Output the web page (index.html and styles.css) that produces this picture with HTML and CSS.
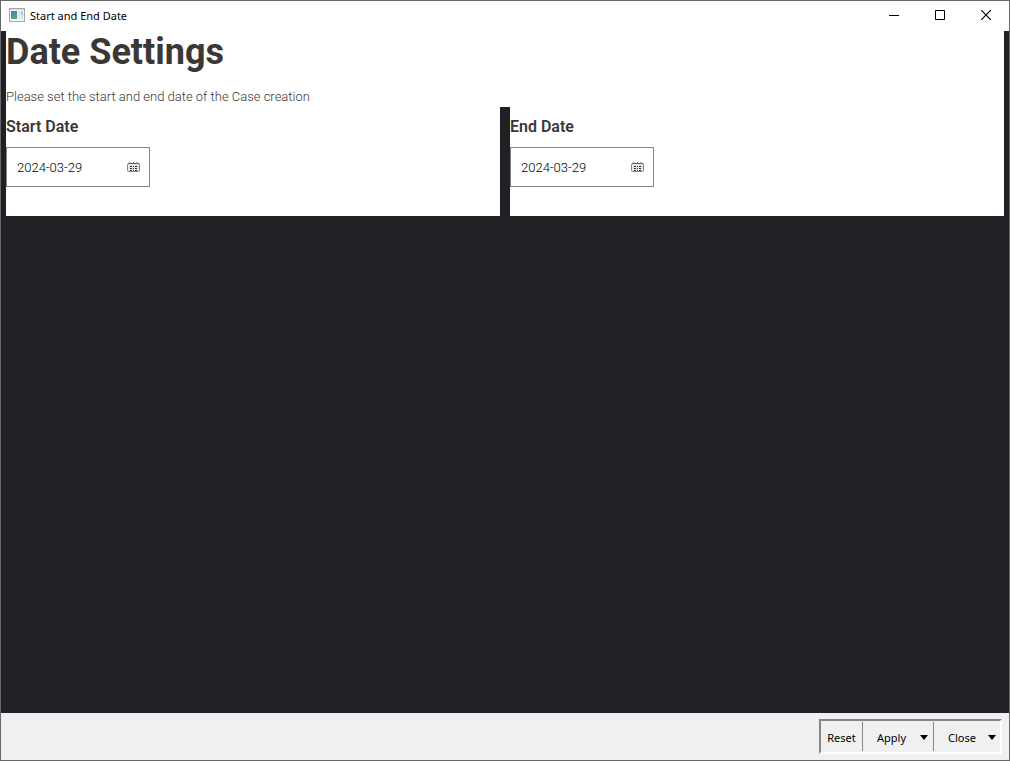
FILE: index.html
```html
<!DOCTYPE html>
<html lang="en">
<head>
<meta charset="utf-8">
<title>Start and End Date</title>
<link rel="stylesheet" href="styles.css">
</head>
<body>
<div class="window">
  <header class="titlebar">
    <svg class="app-icon" width="16" height="14" viewBox="0 0 16 14" aria-hidden="true">
      <defs><linearGradient id="pane" x1="0" y1="0" x2="0" y2="1"><stop offset="0" stop-color="#4b7fae"/><stop offset="1" stop-color="#55aa82"/></linearGradient></defs>
      <rect x=".5" y=".5" width="15" height="13" fill="#f4f5f6" stroke="#a3a8ae"/>
      <path d="M1 1.500h14" stroke="#d3d8de"/>
      <rect x="2" y="3" width="6" height="8" fill="url(#pane)"/>
      <rect x="9" y="3" width="2" height="8" fill="#dfe3e6"/>
      <rect x="12" y="3" width="2" height="4" fill="#a9c6dc"/>
      <rect x="12" y="7" width="2" height="4" fill="#cfe3d8"/>
    </svg>
    <span class="window-title">Start and End Date</span>
    <div class="window-controls">
      <button type="button" aria-label="Minimize"><svg width="10" height="10" viewBox="0 0 10 10"><path d="M0 5.500h10" stroke="#000"/></svg></button>
      <button type="button" aria-label="Maximize"><svg width="10" height="10" viewBox="0 0 10 10"><path d="M.5.5h9v9h-9z" fill="none" stroke="#000"/></svg></button>
      <button type="button" aria-label="Close window"><svg width="10" height="10" viewBox="0 0 10 10"><path d="M0 0l10 10M10 0L0 10" stroke="#000" stroke-width="1.200"/></svg></button>
    </div>
  </header>
  <main class="content">
    <section class="intro">
      <h1>Date Settings</h1>
      <p>Please set the start and end date of the Case creation</p>
    </section>
    <div class="columns">
      <section class="panel">
        <label for="start">Start Date</label>
        <div class="date-field">
          <input id="start" type="text" value="2024-03-29">
          <button type="button" aria-label="Choose start date"><svg width="13" height="10" viewBox="0 0 13 10"><rect x=".5" y="1.500" width="12" height="8" rx="1" fill="#e4e4e4" stroke="#858585"/><path d="M1 1.500h11" stroke="#555" stroke-dasharray="2 1"/><path d="M3 4.500h2m1 0h1m1 0h2M3 6.500h2m1 0h1m1 0h2M3 8.500h2m1 0h1m1 0h2" stroke="#333"/><path d="M3 0v2M6.500 0v2M10 0v2" stroke="#777"/></svg></button>
        </div>
      </section>
      <section class="panel">
        <label for="end">End Date</label>
        <div class="date-field">
          <input id="end" type="text" value="2024-03-29">
          <button type="button" aria-label="Choose end date"><svg width="13" height="10" viewBox="0 0 13 10"><rect x=".5" y="1.500" width="12" height="8" rx="1" fill="#e4e4e4" stroke="#858585"/><path d="M1 1.500h11" stroke="#555" stroke-dasharray="2 1"/><path d="M3 4.500h2m1 0h1m1 0h2M3 6.500h2m1 0h1m1 0h2M3 8.500h2m1 0h1m1 0h2" stroke="#333"/><path d="M3 0v2M6.500 0v2M10 0v2" stroke="#777"/></svg></button>
        </div>
      </section>
    </div>
  </main>
  <footer class="footer">
    <div class="toolbar">
      <button type="button">Reset</button>
      <button type="button" class="split">Apply<svg width="8" height="5" viewBox="0 0 8 5"><path d="M0 0h8L4 5z"/></svg></button>
      <button type="button" class="split">Close<svg width="8" height="5" viewBox="0 0 8 5"><path d="M0 0h8L4 5z"/></svg></button>
    </div>
  </footer>
</div>
</body>
</html>
```
FILE: styles.css
```css
* { box-sizing: border-box; }
body { margin: 0; font-family: Roboto, sans-serif; color: #3b3735; }
button { border: 0; padding: 0; background: none; color: #000; }
svg { display: block; }

.window {
  display: flex;
  flex-direction: column;
  min-height: 100vh;
  border: 1px solid #68686a;
  background: #202124;
}

.titlebar {
  display: flex;
  align-items: center;
  height: 30px;
  padding-left: 8px;
  background: #fff;
}
.app-icon { margin-bottom: 2px; }
.window-title {
  margin-left: 5px;
  font: 11px/16px "Noto Sans", sans-serif;
  color: #000;
}
.window-controls { display: flex; margin-left: auto; align-self: stretch; }
.window-controls button {
  display: grid;
  place-items: center;
  width: 46px;
  padding-bottom: 2px;
}

.content { flex: 1; padding: 0 5px; }
.intro { height: 76px; background: #fff; }
h1 { margin: 0; font-size: 36px; line-height: 42px; font-weight: 700; }
p { margin: 0; padding-top: 14px; font-size: 13px; line-height: 20px; font-weight: 300; }

.columns { display: grid; grid-template-columns: 1fr 1fr; gap: 10px; }
.panel { padding: 8px 0 29px; background: #fff; }
.panel label { display: block; font-size: 16px; line-height: 24px; font-weight: 600; }
.date-field {
  display: flex;
  align-items: center;
  width: 144px;
  height: 40px;
  margin-top: 8px;
  padding: 0 9px 0 10px;
  border: 1px solid #858585;
}
.date-field input {
  flex: 1;
  min-width: 0;
  padding: 2px 0 0;
  border: 0;
  outline: 0;
  background: none;
  font: 300 13px/20px Roboto, sans-serif;
  color: #000;
}

.footer {
  display: flex;
  justify-content: flex-end;
  height: 47px;
  padding: 6px 7px;
  background: #f0f0f0;
}
.toolbar {
  display: flex;
  height: 35px;
  padding: 1px 0;
  border: 2px solid #fff;
  border-top-color: #858585;
  border-left-color: #858585;
}
.toolbar button {
  width: 41px;
  padding-top: 2px;
  font: 11px/16px "Noto Sans", sans-serif;
}
.toolbar .split {
  display: flex;
  align-items: center;
  justify-content: space-between;
  width: 71px;
  padding: 2px 5px 0 14px;
  border-left: 1px solid #858585;
}
.toolbar .split:last-child { width: 67px; padding-right: 4px; }
```
